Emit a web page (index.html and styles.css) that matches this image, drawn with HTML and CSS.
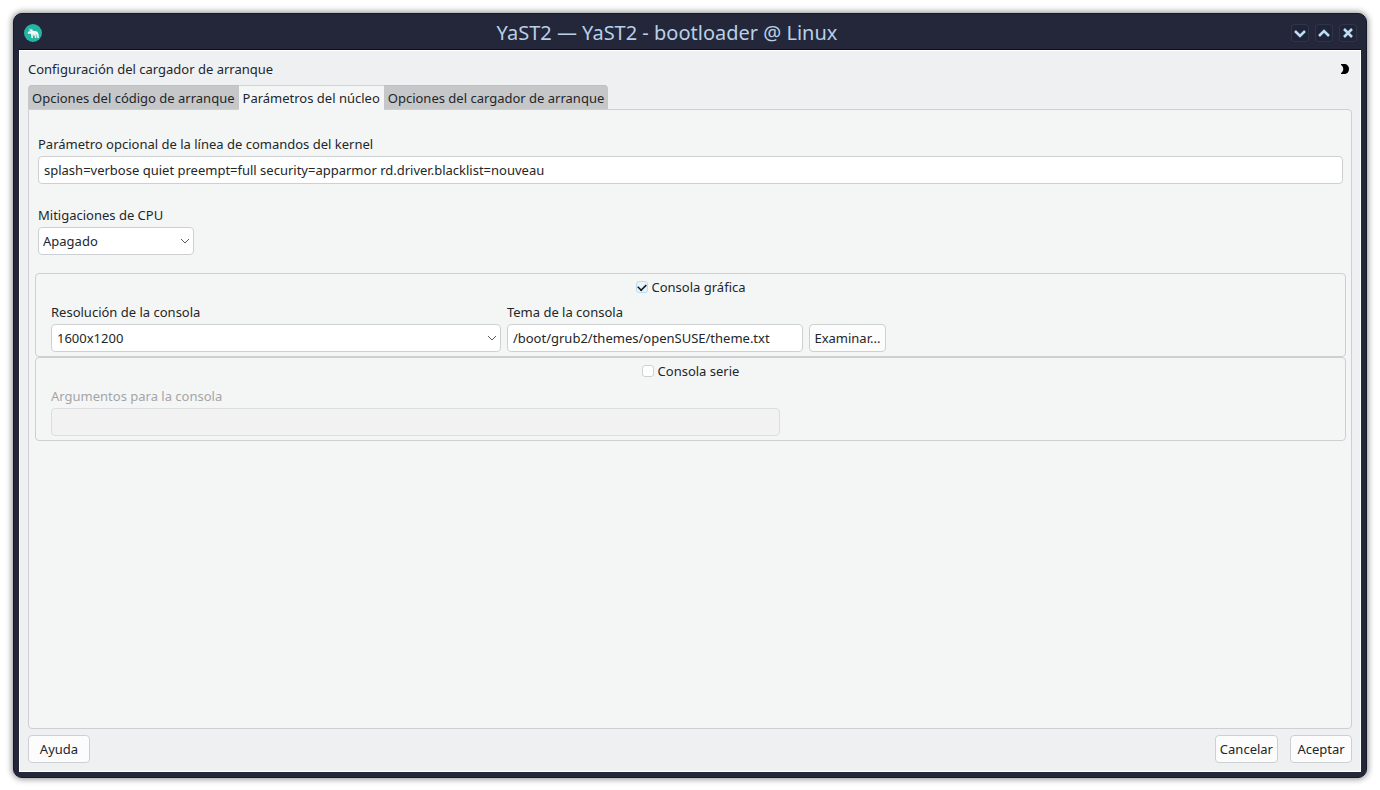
FILE: index.html
```html
<!DOCTYPE html>
<html lang="es">
<head>
    <meta charset="UTF-8">
    <meta name="viewport" content="width=device-width, initial-scale=1.0">
    <title>YaST2 - bootloader @ Linux</title>
    <link rel="stylesheet" href="styles.css">
</head>
<body>
    <div class="window">
        <header class="titlebar">
            <svg class="logo" viewBox="0 0 36 36" aria-hidden="true">
                <circle cx="18" cy="18" r="18" fill="#24b5a5"/>
                <path d="M7 18l3-4 2-1-2-5 4 4 2-3 1 4 3 1c4-1 8 1 9 6l1 8h-3l-1-5-1 5h-3l-1-5-3 1v4h-3l-1-8-3-1-2 1z" fill="#f2f6f4"/>
                <path d="M11 15h2M18 21l1 6M24 20l1 7" stroke="#477d80" stroke-width="1" fill="none"/>
            </svg>
            <h1>YaST2 — YaST2 - bootloader @ Linux</h1>
            <div class="window-buttons">
                <button type="button" aria-label="Minimizar">
                    <svg viewBox="0 0 16 16"><path d="M3 6l5 5 5-5"/></svg>
                </button>
                <button type="button" aria-label="Maximizar">
                    <svg viewBox="0 0 16 16"><path d="M3 11l5-5 5 5"/></svg>
                </button>
                <button type="button" aria-label="Cerrar">
                    <svg viewBox="0 0 16 16"><path d="M4 4l8 8M12 4l-8 8"/></svg>
                </button>
            </div>
        </header>

        <main class="content">
            <div class="heading">
                <h2>Configuración del cargador de arranque</h2>
                <button type="button" class="theme-toggle" aria-label="Cambiar tema">
                    <svg viewBox="0 0 10 12"><path d="M1 1h3c3 0 5 2 5 5s-2 5-5 5h-3v-1c3-2 3-6 0-8z"/></svg>
                </button>
            </div>

            <div class="tabs" role="tablist">
                <button type="button" class="tab" role="tab">Opciones del código de arranque</button>
                <button type="button" class="tab active" role="tab" aria-selected="true">Parámetros del núcleo</button>
                <button type="button" class="tab" role="tab">Opciones del cargador de arranque</button>
            </div>

            <section class="panel" role="tabpanel">
                <div class="field">
                    <label for="kernel-params">Parámetro opcional de la línea de comandos del kernel</label>
                    <input type="text" id="kernel-params" value="splash=verbose quiet preempt=full security=apparmor rd.driver.blacklist=nouveau">
                </div>

                <div class="field">
                    <label for="mitigations">Mitigaciones de CPU</label>
                    <div class="select small">
                        <select id="mitigations">
                            <option>Apagado</option>
                        </select>
                        <svg viewBox="0 0 10 6"><path d="M1 1l4 4 4-4"/></svg>
                    </div>
                </div>

                <div class="group">
                    <label class="check"><input type="checkbox" checked>Consola gráfica</label>
                    <div class="console-row">
                        <div>
                            <label for="resolution">Resolución de la consola</label>
                            <div class="select">
                                <select id="resolution">
                                    <option>1600x1200</option>
                                </select>
                                <svg viewBox="0 0 10 6"><path d="M1 1l4 4 4-4"/></svg>
                            </div>
                        </div>
                        <div>
                            <label for="theme">Tema de la consola</label>
                            <input type="text" id="theme" value="/boot/grub2/themes/openSUSE/theme.txt">
                        </div>
                        <button type="button" class="btn">Examinar...</button>
                    </div>
                </div>

                <div class="group">
                    <label class="check"><input type="checkbox">Consola serie</label>
                    <div class="serial">
                        <label for="serial-args">Argumentos para la consola</label>
                        <input type="text" id="serial-args" disabled>
                    </div>
                </div>
            </section>

            <footer class="actions">
                <button type="button" class="btn help">Ayuda</button>
                <button type="button" class="btn">Cancelar</button>
                <button type="button" class="btn">Aceptar</button>
            </footer>
        </main>
    </div>
</body>
</html>
```
FILE: styles.css
```css
* {
    box-sizing: border-box;
}
body {
    margin: 0;
    padding: 13px 13px 12px;
    min-height: 100vh;
    display: flex;
    background: #fff;
    color: #232629;
    font-family: "Noto Sans", "Open Sans", sans-serif;
    font-size: 13px;
    line-height: 18px;
}
button, input, select {
    font: inherit;
    color: inherit;
    margin: 0;
}
.window {
    flex: 1;
    display: flex;
    flex-direction: column;
    background: #24273a;
    border: 1px solid #15172a;
    border-radius: 9px;
    padding: 0 5px 5px;
    box-shadow: 0 0 6px 1px rgba(0, 0, 0, 0.45);
}
.titlebar {
    display: flex;
    align-items: center;
    height: 36px;
    padding: 2px 5px 0 5px;
    border-bottom: 1px solid #0b0c1c;
}
.titlebar h1 {
    flex: 1;
    margin: 0;
    font-size: 20px;
    font-weight: 400;
    line-height: 26px;
    text-align: center;
    color: #b8d0e8;
}
.logo {
    width: 18px;
    height: 18px;
}
.window-buttons {
    display: flex;
    gap: 8px;
}
.window-buttons button {
    width: 16px;
    height: 16px;
    padding: 0;
    border: 0;
    border-radius: 3px;
    background: #202438;
    box-shadow: 0 0 0 1px #303448;
}
.window-buttons svg {
    display: block;
    fill: none;
    stroke: #bedcf3;
    stroke-width: 2.5;
}
.content {
    flex: 1;
    display: flex;
    flex-direction: column;
    background: #eff0f2;
    border: 1px solid #fff;
    padding: 9px 8px 8px;
}
.heading {
    display: flex;
    justify-content: space-between;
    align-items: center;
    margin-bottom: 7px;
}
.heading h2 {
    margin: 0;
    font-size: 13px;
    font-weight: 400;
}
.theme-toggle {
    width: 14px;
    height: 14px;
    padding: 0;
    border: 0;
    background: none;
}
.theme-toggle svg {
    display: block;
    width: 10px;
    height: 12px;
    margin: 0 auto;
}
.tabs {
    display: flex;
}
.tab {
    height: 24px;
    padding: 0 4px;
    border: 0;
    border-top: 1px solid #bfc1c3;
    background: #c6c7c9;
}
.tab:first-child {
    border-top-left-radius: 4px;
}
.tab:last-child {
    border-top-right-radius: 4px;
}
.tab.active {
    background: #f4f6f6;
    border-top-color: #b8dcf8;
    margin-bottom: -1px;
    padding-bottom: 1px;
    height: 25px;
    z-index: 1;
}
.panel {
    flex: 1;
    padding: 25px 5px 6px 6px;
    background: #f4f6f6;
    border: 1px solid #cdd0d2;
    border-radius: 0 4px 4px 4px;
}
.panel label {
    display: block;
    margin-bottom: 3px;
}
.field {
    margin: 0 3px 22px;
}
input[type="text"], select {
    display: block;
    width: 100%;
    height: 28px;
    padding: 0 5px;
    background: #fff;
    border: 1px solid #cdd0d2;
    border-radius: 4px;
}
input[type="text"]:disabled {
    background: #f2f2f2;
    border-color: #dcdedf;
}
.select {
    position: relative;
}
.select select {
    appearance: none;
}
.select svg {
    position: absolute;
    right: 4px;
    top: 50%;
    width: 10px;
    height: 6px;
    margin-top: -3px;
    fill: none;
    stroke: #585c60;
    pointer-events: none;
}
.select.small {
    width: 156px;
}
.select.small select {
    padding: 0 4px;
}
.group {
    padding: 4px 15px;
    border: 1px solid #cdd0d2;
    border-radius: 4px;
}
.field + .group {
    margin-top: -4px;
}
.panel .check {
    display: flex;
    justify-content: center;
    align-items: center;
    gap: 4px;
    margin-bottom: 7px;
}
.check input {
    appearance: none;
    width: 12px;
    height: 12px;
    background: #fff;
    border: 1px solid #cdd0d2;
    border-radius: 3px;
}
.check input:checked {
    border-color: #b8dcf8;
    background: #e8f3fb;
}
.check input:checked::before {
    content: "";
    display: block;
    width: 8px;
    height: 5px;
    margin: 1px auto 0;
    border: solid #16191c;
    border-width: 0 0 2px 2px;
    transform: rotate(-45deg) scale(0.8);
}
.console-row {
    display: grid;
    grid-template-columns: 38fr 25fr 77px 37fr;
    gap: 6px;
    align-items: end;
}
.serial {
    width: 57%;
    color: #a3a5a6;
}
.btn {
    height: 28px;
    padding: 0 4px;
    background: #fcfcfc;
    border: 1px solid #cdd0d2;
    border-radius: 4px;
}
.actions {
    display: flex;
    gap: 12px;
    padding-top: 6px;
}
.actions .btn {
    min-width: 62px;
}
.actions .help {
    margin-right: auto;
}
```
